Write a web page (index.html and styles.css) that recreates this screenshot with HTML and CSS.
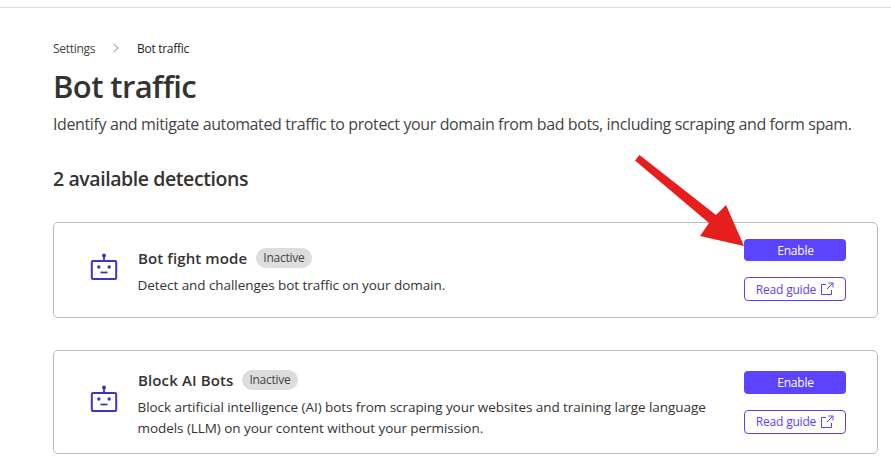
FILE: index.html
```html
<!DOCTYPE html>
<html lang="en">
<head>
    <meta charset="UTF-8">
    <meta name="viewport" content="width=device-width, initial-scale=1.0">
    <title>Bot traffic</title>
    <link rel="stylesheet" href="styles.css">
</head>
<body>
    <div class="topbar"></div>
    <div class="container">
        <nav class="breadcrumb">
            <span class="crumb">Settings</span>
            <svg class="crumb-sep" width="8" height="10" viewBox="0 0 8 10"><path d="M1.5 1 L6 5 L1.5 9" fill="none" stroke="#8a8a8a" stroke-width="1"/></svg>
            <span class="crumb current">Bot traffic</span>
        </nav>
        <h1>Bot traffic</h1>
        <p class="intro">Identify and mitigate automated traffic to protect your domain from bad bots, including scraping and form spam.</p>
        <h2>2 available detections</h2>

        <!-- Detection cards -->
        <div class="card card-first">
            <svg class="bot" width="30" height="30" viewBox="0 0 30 30">
                <circle cx="15" cy="3.5" r="2" fill="#3d33c9"/>
                <path d="M15 4 V9" stroke="#3d33c9" stroke-width="1.8"/>
                <rect x="2.8" y="9" width="24.4" height="18" rx="1.2" fill="none" stroke="#3d33c9" stroke-width="2"/>
                <circle cx="9.8" cy="15" r="1.7" fill="#3d33c9"/>
                <circle cx="20.2" cy="15" r="1.7" fill="#3d33c9"/>
                <path d="M11.5 20.5 H18.5" stroke="#3d33c9" stroke-width="1.8"/>
            </svg>
            <div class="card-body">
                <div class="card-title">
                    <h3>Bot fight mode</h3>
                    <span class="badge">Inactive</span>
                </div>
                <p>Detect and challenges bot traffic on your domain.</p>
            </div>
            <div class="actions">
                <button type="button" class="btn-primary">Enable</button>
                <a class="btn-outline">Read guide
                    <svg width="14" height="14" viewBox="0 0 14 14"><path d="M6 2.5 H1.5 V12.5 H11.5 V8 M7 7 L12.5 1.5 M8.5 1 H13 V5.5" fill="none" stroke="#5b43f5" stroke-width="1"/></svg>
                </a>
            </div>
        </div>

        <div class="card card-second">
            <svg class="bot" width="30" height="30" viewBox="0 0 30 30">
                <circle cx="15" cy="3.5" r="2" fill="#3d33c9"/>
                <path d="M15 4 V9" stroke="#3d33c9" stroke-width="1.8"/>
                <rect x="2.8" y="9" width="24.4" height="18" rx="1.2" fill="none" stroke="#3d33c9" stroke-width="2"/>
                <circle cx="9.8" cy="15" r="1.7" fill="#3d33c9"/>
                <circle cx="20.2" cy="15" r="1.7" fill="#3d33c9"/>
                <path d="M11.5 20.5 H18.5" stroke="#3d33c9" stroke-width="1.8"/>
            </svg>
            <div class="card-body">
                <div class="card-title">
                    <h3>Block AI Bots</h3>
                    <span class="badge">Inactive</span>
                </div>
                <p>Block artificial intelligence (AI) bots from scraping your websites and training large language models (LLM) on your content without your permission.</p>
            </div>
            <div class="actions">
                <button type="button" class="btn-primary">Enable</button>
                <a class="btn-outline">Read guide
                    <svg width="14" height="14" viewBox="0 0 14 14"><path d="M6 2.5 H1.5 V12.5 H11.5 V8 M7 7 L12.5 1.5 M8.5 1 H13 V5.5" fill="none" stroke="#5b43f5" stroke-width="1"/></svg>
                </a>
            </div>
        </div>
    </div>

    <!-- Red annotation arrow drawn over the page -->
    <svg class="arrow" width="891" height="475" viewBox="0 0 891 475">
        <polygon points="639.5,155 635,160.5 709,223 700,236 744,246 726,205 716,215" fill="#e61e1e"/>
    </svg>
</body>
</html>
```

FILE: styles.css
```css
html, body {
    margin: 0;
    padding: 0;
    height: 475px;
    overflow: hidden;
}

body {
    position: relative;
    font-family: "Open Sans", "Noto Sans", sans-serif;
    background-color: white;
    color: #333;
}

.topbar {
    height: 7px;
    border-bottom: 1px solid #ddd;
}

.container {
    padding: 32px 13px 0 53px;
}

.breadcrumb {
    display: flex;
    align-items: center;
    height: 16px;
    font-size: 12px;
    letter-spacing: -0.3px;
}

.crumb {
    color: #444;
}

.crumb.current {
    color: #222;
}

.crumb-sep {
    margin: 0 17px 0 17px;
}

h1 {
    margin: 8px 0 0 0;
    font-size: 31px;
    line-height: 44px;
    font-weight: 600;
    color: #333;
    letter-spacing: -0.6px;
}

.intro {
    margin: 5px 0 0 0;
    font-size: 16px;
    line-height: 22px;
    color: #444;
    letter-spacing: -0.38px;
    white-space: nowrap;
}

h2 {
    margin: 30px 0 0 0;
    font-size: 19.5px;
    line-height: 28px;
    font-weight: 600;
    color: #333;
    letter-spacing: -0.42px;
}

.card {
    display: flex;
    align-items: center;
    box-sizing: border-box;
    border: 1px solid #bbb;
    border-radius: 5px;
    padding: 0 31px 0 35px;
}

.card-first {
    height: 96px;
    margin-top: 29px;
}

.card-second {
    height: 104px;
    margin-top: 32px;
}

.bot {
    flex: none;
    margin-right: 19px;
    margin-bottom: 7px;
}

.card-body {
    flex: 1;
    padding-right: 20px;
    padding-top: 3px;
}

.card-title {
    display: flex;
    align-items: center;
    gap: 8.5px;
}

h3 {
    margin: 0;
    font-size: 15px;
    line-height: 22px;
    font-weight: 600;
    color: #333;
    letter-spacing: 0.12px;
}

.badge {
    background-color: #ddd;
    border-radius: 10px;
    padding: 0 7.5px;
    font-size: 12px;
    line-height: 20px;
    color: #444;
    letter-spacing: -0.25px;
}

.card-body p {
    margin: 6px 0 0 0;
    font-size: 13.5px;
    line-height: 20.5px;
    color: #333;
    letter-spacing: -0.06px;
    margin-left: -0.5px;
}

.actions {
    flex: none;
    display: flex;
    flex-direction: column;
    gap: 16px;
    width: 102px;
}

.btn-primary {
    height: 23px;
    border: none;
    border-radius: 4px;
    background-color: #5b43ff;
    color: white;
    font-family: inherit;
    font-size: 12px;
    letter-spacing: -0.2px;
    padding: 0 0 0 1px;
}

.card-first .btn-primary {
    height: 22px;
}

.btn-outline {
    display: flex;
    align-items: center;
    justify-content: center;
    gap: 4px;
    box-sizing: border-box;
    height: 24px;
    border: 1px solid #5b43f5;
    border-radius: 4px;
    color: #5b43f5;
    font-size: 12px;
    letter-spacing: -0.2px;
}

.arrow {
    position: absolute;
    top: 0;
    left: 0;
}
```
